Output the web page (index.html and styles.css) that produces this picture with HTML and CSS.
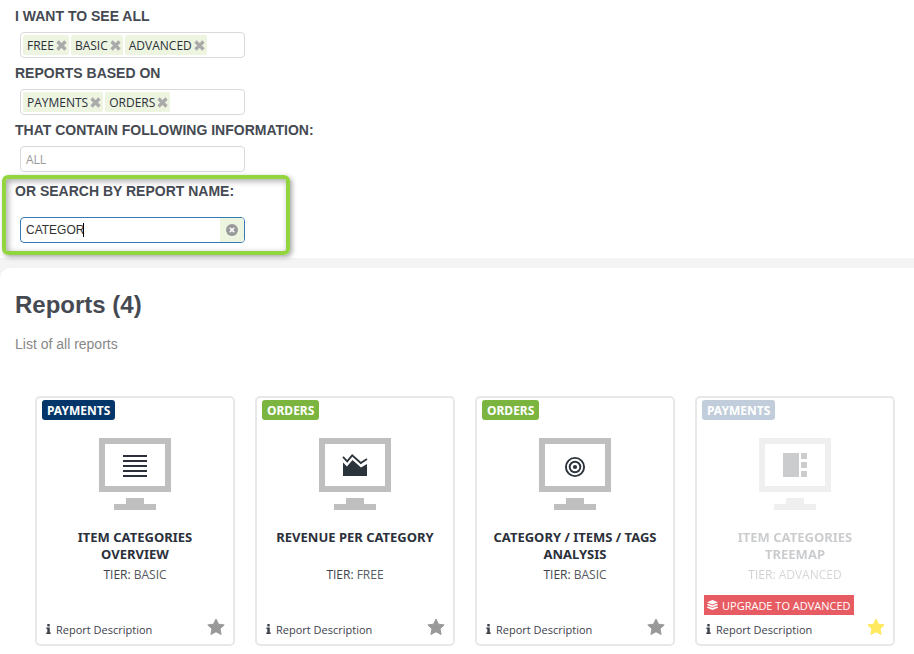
FILE: index.html
```html
<!DOCTYPE html>
<html lang="en">
<head>
<meta charset="utf-8">
<title>Reports</title>
<link rel="stylesheet" href="styles.css">
</head>
<body>
<svg class="defs" aria-hidden="true">
  <symbol id="monitor" viewBox="0 0 72 72"><path fill="#bfbfbf" fill-rule="evenodd" d="M0 0H72V54H0ZM6 6V48H66V6ZM27 60H45V66H57V72H15V66H27Z"/></symbol>
  <symbol id="cross" viewBox="0 0 11 11"><path d="M1.5 1.5 9.5 9.5M9.5 1.5 1.5 9.5" stroke="#aaa" stroke-width="3.2"/></symbol>
  <symbol id="star" viewBox="0 0 18 18"><path fill="currentColor" stroke="currentColor" stroke-linejoin="round" d="M9 1 11.4 6.2 17.2 6.9 13 10.8 14.1 16.5 9 13.7 3.9 16.5 5 10.8.8 6.9 6.6 6.2Z"/></symbol>
  <symbol id="info" viewBox="0 0 5 10"><path fill="currentColor" d="M1.3 0H3.7V2.4H1.3ZM.4 3.6H3.8V8.6H4.7V10H.3V8.6H1.3V5H.4Z"/></symbol>
</svg>
<section class="panel filters">
  <h2 class="label">I WANT TO SEE ALL</h2>
  <div class="field">
    <span class="chip">FREE<button type="button" aria-label="Remove FREE"><svg><use href="#cross"/></svg></button></span>
    <span class="chip">BASIC<button type="button" aria-label="Remove BASIC"><svg><use href="#cross"/></svg></button></span>
    <span class="chip">ADVANCED<button type="button" aria-label="Remove ADVANCED"><svg><use href="#cross"/></svg></button></span>
  </div>
  <h2 class="label">REPORTS BASED ON</h2>
  <div class="field">
    <span class="chip">PAYMENTS<button type="button" aria-label="Remove PAYMENTS"><svg><use href="#cross"/></svg></button></span>
    <span class="chip">ORDERS<button type="button" aria-label="Remove ORDERS"><svg><use href="#cross"/></svg></button></span>
  </div>
  <label class="label" for="info-filter">THAT CONTAIN FOLLOWING INFORMATION:</label>
  <div class="field"><input id="info-filter" type="text" placeholder="ALL"></div>
  <div class="search">
    <label class="label" for="name-filter">OR SEARCH BY REPORT NAME:</label>
    <div class="field active">
      <input id="name-filter" type="text" value="CATEGOR">
      <button class="clear" type="button" aria-label="Clear search"><svg viewBox="0 0 12 12"><circle cx="6" cy="6" r="6" fill="#999"/><path d="M3.7 3.7 8.3 8.3M8.3 3.7 3.7 8.3" stroke="#fff" stroke-width="1.5"/></svg></button>
    </div>
  </div>
</section>
<main class="panel reports">
  <h1>Reports (4)</h1>
  <p class="subtitle">List of all reports</p>
  <div class="cards">
    <article class="card">
      <div class="content">
        <span class="badge payments">PAYMENTS</span>
        <svg class="picture" viewBox="0 0 72 72"><use href="#monitor"/><path fill="#2b303b" d="M24 17H48V19H24ZM24 22H48V24H24ZM24 27H48V29H24ZM24 32H48V34H24ZM24 37H48V39H24Z"/></svg>
        <h3>ITEM CATEGORIES OVERVIEW</h3>
        <p class="tier"><b>TIER:</b> BASIC</p>
      </div>
      <footer><a href="#"><svg class="i"><use href="#info"/></svg>Report Description</a><button class="star" type="button" aria-label="Favourite"><svg><use href="#star"/></svg></button></footer>
    </article>
    <article class="card">
      <div class="content">
        <span class="badge orders">ORDERS</span>
        <svg class="picture" viewBox="0 0 72 72"><use href="#monitor"/><path fill="#2b333b" d="M24 24.5 28 28.5 33.5 22 42 29.5 48 26V38H24Z"/><path fill="none" stroke="#2b333b" stroke-width="1.8" d="M24 18.8 28.2 23.3 33.2 17.3 41.8 25 48 21"/></svg>
        <h3>REVENUE PER CATEGORY</h3>
        <p class="tier"><b>TIER:</b> FREE</p>
      </div>
      <footer><a href="#"><svg class="i"><use href="#info"/></svg>Report Description</a><button class="star" type="button" aria-label="Favourite"><svg><use href="#star"/></svg></button></footer>
    </article>
    <article class="card">
      <div class="content">
        <span class="badge orders">ORDERS</span>
        <svg class="picture" viewBox="0 0 72 72"><use href="#monitor"/><g fill="none" stroke="#2b333b" stroke-width="1.9"><circle cx="36" cy="29" r="9.1"/><circle cx="36" cy="29" r="5.3"/></g><circle cx="36" cy="29" r="2.1" fill="#2b333b"/></svg>
        <h3>CATEGORY / ITEMS / TAGS ANALYSIS</h3>
        <p class="tier"><b>TIER:</b> BASIC</p>
      </div>
      <footer><a href="#"><svg class="i"><use href="#info"/></svg>Report Description</a><button class="star" type="button" aria-label="Favourite"><svg><use href="#star"/></svg></button></footer>
    </article>
    <article class="card locked">
      <div class="content">
        <span class="badge payments">PAYMENTS</span>
        <svg class="picture" viewBox="0 0 72 72"><use href="#monitor"/><path fill="#2b303b" d="M24 15H40V39H24ZM42 15H48V21H42ZM42 24H48V30H42ZM42 33H48V39H42Z"/></svg>
        <h3>ITEM CATEGORIES TREEMAP</h3>
        <p class="tier"><b>TIER:</b> ADVANCED</p>
      </div>
      <button class="upgrade" type="button"><svg viewBox="0 0 11 10"><path fill="#fff" d="M5.5 0 11 2.3 5.5 4.6 0 2.3ZM0 4.4 1.6 3.8 5.5 5.4 9.4 3.8 11 4.4V5L5.5 7.3 0 5ZM0 7.1 1.6 6.5 5.5 8.1 9.4 6.5 11 7.1V7.7L5.5 10 0 7.7Z"/></svg>UPGRADE TO ADVANCED</button>
      <footer><a href="#"><svg class="i"><use href="#info"/></svg>Report Description</a><button class="star on" type="button" aria-label="Favourite"><svg><use href="#star"/></svg></button></footer>
    </article>
  </div>
</main>
</body>
</html>
```
FILE: styles.css
```css
*, *::before, *::after { box-sizing: border-box; }
body { margin: 0; background: #f4f4f4; color: #2b303b; font-family: "Open Sans", "Noto Sans", sans-serif; font-size: 12px; }
h1, h2, h3, p { margin: 0; }
button { padding: 0; border: 0; background: none; font: inherit; cursor: pointer; }
svg { display: block; }
.defs { position: absolute; width: 0; height: 0; }
.panel { background: #fff; padding: 6px 15px 15px; }
.label { display: block; margin-bottom: 6px; color: #454a52; font: bold 14px/20px "Liberation Sans", Arial, sans-serif; }
.field { display: flex; gap: 2px; width: 225px; height: 26px; margin: 0 0 5px 5px; padding: 2px; border: 1px solid #d9d9d9; border-radius: 4px; background: #fff; }
.chip { display: flex; align-items: center; gap: 2px; height: 20px; padding: 0 2px 0 4px; border-radius: 2px; background: #edf4e0; }
.chip svg { width: 11px; height: 11px; }
.field input { flex: 1; min-width: 0; padding: 0 3px; border: 0; outline: 0; background: none; color: #333; font: 12px "Open Sans", sans-serif; }
.field input::placeholder { color: #999; opacity: 1; }
.search { position: relative; padding-top: 4px; }
.search::after { content: ""; position: absolute; top: -2px; left: -13px; width: 288px; height: 80px; border: 4px solid #92d53f; border-radius: 6px; box-shadow: 2px 2px 5px rgba(0,0,0,.35), inset 2px 2px 6px rgba(0,0,0,.35); pointer-events: none; }
.search .label { margin-bottom: 16px; }
.field.active { position: relative; margin-bottom: 0; padding: 0; border-color: #337ab7; overflow: hidden; }
.active::before { content: ""; position: absolute; top: 5px; left: 62px; width: 1px; height: 14px; background: #000; }
.active input { padding: 0 5px; font-family: "Liberation Sans", Arial, sans-serif; }
.clear { display: grid; place-items: center; width: 24px; background: #edf4e0; }
.clear svg { width: 12px; height: 12px; }
.reports { margin-top: 10px; border-radius: 10px 0 0 0; padding-top: 21px; padding-bottom: 8px; }
h1 { color: #454a52; font: bold 24px/32px "Liberation Sans", Arial, sans-serif; }
.subtitle { margin-top: 13px; color: #888; font: 14px/20px "Liberation Sans", Arial, sans-serif; }
.cards { display: grid; grid-template-columns: repeat(auto-fill, 200px); gap: 20px; padding: 42px 0 0 20px; }
.card { display: flex; flex-direction: column; min-height: 250px; padding: 2px 5px 3px; border: 2px solid #e8e8e8; border-radius: 5px; }
.content { display: flex; flex-direction: column; align-items: center; }
.badge { align-self: flex-start; padding: 1px 5px 0; border-radius: 3px; color: #fff; font-family: "Noto Sans", sans-serif; font-weight: bold; line-height: 19px; }
.payments { background: #043669; }
.orders { background: #7bb540; }
.picture { width: 72px; height: 72px; margin: 18px 0 19px; }
h3 { min-height: 34px; padding: 0 10px; font-family: "Noto Sans", sans-serif; font-size: 13px; line-height: 17px; text-align: center; }
.tier { margin-top: 3px; line-height: 18px; color: #555a63; }
.tier b { font-weight: 500; color: #3d424b; }
.locked .content { opacity: .25; }
.upgrade { display: flex; align-items: center; align-self: flex-start; gap: 4px; height: 20px; margin: 11px 0 0 2px; padding: 0 3px; background: #e75c62; color: #fff; font-size: 11px; font-weight: 500; }
.upgrade svg { width: 11px; height: 10px; }
footer { display: flex; align-items: center; justify-content: space-between; margin-top: auto; padding: 0 3px 0 4px; height: 24px; }
footer a { display: flex; align-items: center; gap: 5px; color: #3d424b; text-decoration: none; font-size: 11px; }
.i { width: 5px; height: 10px; }
.star { color: #999; }
.star svg { width: 18px; height: 18px; margin-bottom: 4px; }
.star.on { color: #ffe95e; }
```
